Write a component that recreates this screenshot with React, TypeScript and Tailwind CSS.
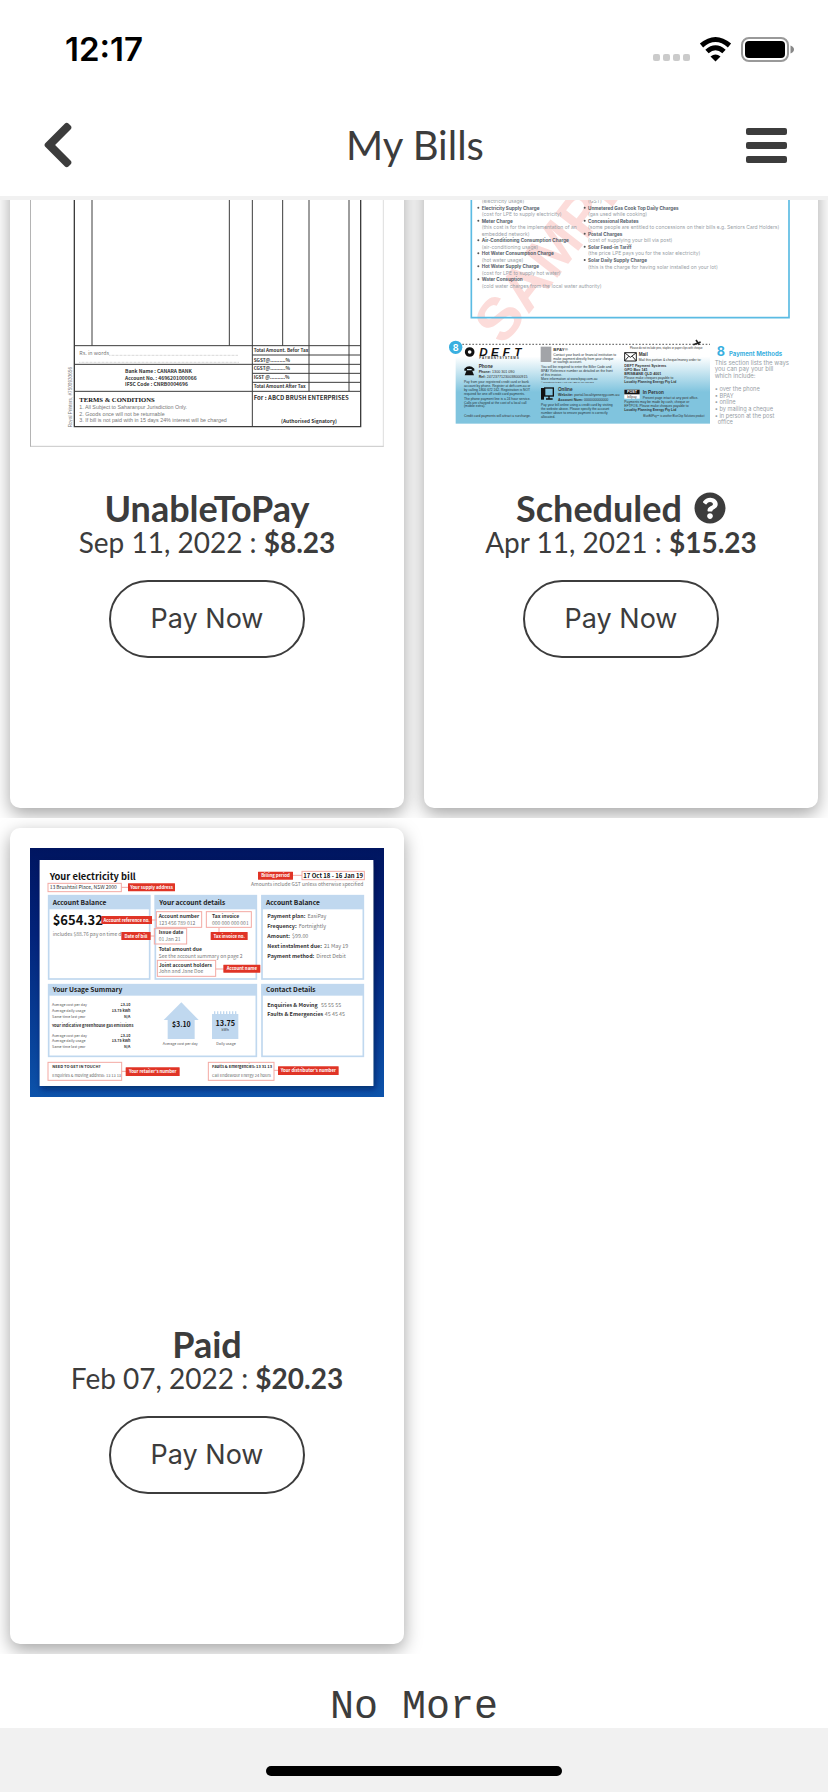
import { useLayoutEffect, useRef } from 'react';
import type { ReactNode } from 'react';
import { FaChevronLeft, FaQuestionCircle } from 'react-icons/fa';

type TextProps = {
  x: number;
  y: number;
  size: number;
  fill?: string;
  bold?: boolean;
  anchor?: 'start' | 'middle' | 'end';
  children: ReactNode;
};

function T({ x, y, size, fill = '#333', bold = false, anchor = 'start', children }: TextProps) {
  return (
    <text x={x} y={y} fontSize={size} fill={fill} fontWeight={bold ? 700 : 400} textAnchor={anchor}>
      {children}
    </text>
  );
}

/* The scans are drawn at three units to the pixel. */

function TaxInvoice() {
  return (
    <svg viewBox="0 0 1062 1350" className="block w-full font-['Noto_Sans',sans-serif]" role="img" aria-label="Tax invoice">
      <g transform="translate(-90 534)">
        <path d="M91 -534V770" stroke="#777" strokeWidth="2" />
        <path d="M91 769H1151" stroke="#aaa" strokeWidth="2" />
        <path d="M1150 -534V770" stroke="#ccc" strokeWidth="2" />
        <g stroke="#3c3c3c" strokeWidth="3" fill="none">
          <path d="M223 -534V710H1082V-534" strokeWidth="4" />
          <path d="M276 -534V467M688 -534V467M757 -534V710M848 -534V467M927 -534V604M1047 -534V604" />
          <path d="M223 467H1082M757 495H1082M223 523H1082M757 550H1082M757 577H1082M223 604H1082" />
        </g>
        <path d="M328 496H716M238 517H716" stroke="#aaa" strokeWidth="2" strokeDasharray="2 2" />
        <g className="font-['Noto_Sans_CJK_SC',sans-serif]">
          <T x={238} y={496} size={16} fill="#777">Rs. in words</T>
          <T x={761} y={487} size={14} bold>Total Amount. Befor Tax</T>
          <T x={761} y={515} size={14} bold>SGST@..........%</T>
          <T x={761} y={541} size={14} bold>CGST@..........%</T>
          <T x={761} y={568} size={14} bold>IGST @..........%</T>
          <T x={761} y={595} size={14} bold>Total Amount After Tax</T>
          <T x={375} y={550} size={15} bold>Bank Name : CANARA BANK</T>
          <T x={375} y={570} size={15} bold>Account No. : 4696201000066</T>
          <T x={375} y={589} size={15} bold>IFSC Code : CNRB0004696</T>
          <T x={761} y={630} size={18} bold>For : ABCD BRUSH ENTERPRISES</T>
          <T x={843} y={698} size={15} bold>(Authorised Signatory)</T>
        </g>
        <g className="font-['Liberation_Serif',serif]">
          <T x={238} y={636} size={20} fill="#111" bold>TERMS &amp; CONDITIONS</T>
        </g>
        <g className="font-['Liberation_Sans',sans-serif]">
          <T x={238} y={658} size={16} fill="#777">1. All Subject to Saharanpur Jurisdiction Only.</T>
          <T x={238} y={677} size={16} fill="#777">2. Goods once will not be returnable</T>
          <T x={238} y={695} size={16} fill="#777">3. If bill is not paid with in 15 days 24% interest will be charged</T>
          <g transform="translate(217 712) rotate(-90)">
            <T x={0} y={0} size={14} fill="#777">Royal Printers, #7500930656</T>
          </g>
        </g>
      </g>
    </svg>
  );
}

const leftCharges: [string, string, number][] = [
  ['', '(electricity usage)', 39],
  ['Electricity Supply Charge', '(cost for LPE to supply electricity)', 59],
  ['Meter Charge', '(this cost is for the implementation of an', 98],
  ['Air-Conditioning Consumption Charge', '(air-conditioning usage)', 157],
  ['Hot Water Consumption Charge', '(hot water usage)', 196],
  ['Hot Water Supply Charge', '(cost for LPE to supply hot water)', 235],
  ['Water Consuption', '(cold water charges from the local water authority)', 274],
];

const rightCharges: [string, string, number][] = [
  ['', '(GST)', 39],
  ['Unmetered Gas Cook Top Daily Charges', '(gas used while cooking)', 59],
  ['Concessional Rebates', '(some people are entitled to concessions on their bills e.g. Seniors Card Holders)', 98],
  ['Postal Charges', '(cost of supplying your bill via post)', 137],
  ['Solar Feed-in Tariff', '(the price LPE pays you for the solar electricity)', 176],
  ['Solar Daily Supply Charge', '(this is the charge for having solar installed on your lot)', 216],
];

function Charges({ x, rows }: { x: number; rows: [string, string, number][] }) {
  return (
    <>
      {rows.map(([name, note, y]) => (
        <g key={note}>
          {name && <circle cx={x - 10} cy={y - 6} r="3" fill="#555" />}
          {name && <T x={x} y={y} size={14} fill="#56606a" bold>{name}</T>}
          <T x={x} y={name ? y + 20 : y} size={15} fill="#98a0a6">{note}</T>
        </g>
      ))}
    </>
  );
}

function Lines({ x, y, step, size, rows, fill = '#26343c' }: { x: number; y: number; step: number; size: number; rows: string[]; fill?: string }) {
  return (
    <>
      {rows.map((row, i) => (
        <T key={row} x={x} y={y + i * step} size={size} fill={fill}>{row}</T>
      ))}
    </>
  );
}

function EnergyStatement() {
  return (
    <svg viewBox="0 0 1062 1350" className="block w-full font-['Inter',sans-serif]" role="img" aria-label="Energy statement">
      <defs>
        <linearGradient id="deft" x1="0" y1="0" x2="0" y2="1">
          <stop offset="0.15" stopColor="#fff" />
          <stop offset="0.6" stopColor="#80c4de" />
          <stop offset="1" stopColor="#80c4de" />
        </linearGradient>
      </defs>
      <g transform="translate(-90 534)">
        <g transform="translate(268 470) rotate(-52)" className="font-['Liberation_Sans',sans-serif]">
          <T x={0} y={0} size={180} fill="#fcdcda" bold>SAMPLE</T>
        </g>
        <Charges x={203} rows={leftCharges} />
        <T x={203} y={138} size={15} fill="#98a0a6">embedded network)</T>
        <Charges x={522} rows={rightCharges} />
        <path d="M172 -534V383H1125V-534" fill="none" stroke="#5bbbe3" strokeWidth="5" />
      </g>
      <g transform="translate(-90 924)">
        <rect x="125" y="74" width="763" height="237" fill="url(#deft)" />
        <path d="M145 73H888" stroke="#777" strokeWidth="4" strokeDasharray="5 5" />
        <path d="M838 74L860 66M846 60L856 74" stroke="#222" strokeWidth="5" />
        <circle cx="125" cy="82" r="20" fill="#39afe0" />
        <T x={125} y={92} size={27} fill="#fff" bold anchor="middle">8</T>
        <circle cx="167" cy="96" r="10" fill="none" stroke="#111" strokeWidth="9" />
        <g className="font-['Liberation_Sans',sans-serif] italic">
          {['D', 'E', 'F', 'T'].map((letter, i) => (
            <T key={letter} x={196 + i * 35} y={108} size={35} fill="#111" bold>{letter}</T>
          ))}
        </g>
        <g className="font-['Liberation_Sans',sans-serif]">
          <T x={196} y={118} size={9} bold>P A Y M E N T   S Y S T E M S</T>
          <path d="M151 146q15-14 30 0v6h-8v-5h-14v5h-8zM158 151h16l6 15h-28z" fill="#111" />
          <T x={194} y={144} size={14} bold>Phone</T>
          <T x={194} y={160} size={11}><tspan fontWeight="700">Phone:</tspan> 1300 301 090</T>
          <T x={194} y={173} size={11}><tspan fontWeight="700">Ref:</tspan> 24723771230038000915</T>
          <Lines x={150} y={188} step={12} size={10} rows={['Pay from your registered credit card or bank', 'account by phone. Register at deft.com.au or', 'by calling 1800 672 162. Registration is NOT', 'required for one off credit card payments.']} />
          <Lines x={150} y={240} step={11} size={10} rows={['The phone payment line is a 24 hour service.', 'Calls are charged at the cost of a local call', '(mobile extra).']} />
          <T x={150} y={292} size={10}>Credit card payments will attract a surcharge.</T>
          <rect x="380" y="80" width="32" height="46" fill="#a2a4a8" />
          <T x={418} y={92} size={13} bold>BPAY®</T>
          <Lines x={418} y={108} step={11} size={10} rows={['Contact your bank or financial institution to', 'make payment directly from your cheque', 'or savings account.']} />
          <Lines x={381} y={144} step={12} size={10} rows={['You will be required to enter the Biller Code and', 'BPAY Reference number as detailed on the front', 'of this invoice.', 'More information at www.bpay.com.au']} />
          <T x={381} y={190} size={7}>® Registered to BPAY Pty Ltd ABN 69 079 137 518</T>
          <rect x="392" y="204" width="26" height="24" fill="none" stroke="#111" strokeWidth="4" />
          <path d="M405 228v9M396 237h20" stroke="#111" strokeWidth="4" />
          <rect x="381" y="204" width="9" height="35" fill="#111" />
          <T x={432} y={213} size={14} bold>Online</T>
          <T x={432} y={229} size={11}><tspan fontWeight="700">Website:</tspan> portal.localityenergy.com.au</T>
          <T x={432} y={243} size={11}><tspan fontWeight="700">Account Num:</tspan> 000000000000</T>
          <Lines x={381} y={257} step={12} size={10} rows={['Pay your bill online using a credit card by visiting', 'the website above. Please specify the account', 'number above to ensure payment is correctly', 'allocated.']} />
          <T x={648} y={86} size={8}>Please do not include pins, staples or paper clips with cheque</T>
          <path d="M632 98h35v25h-35zl17 14 18-14M632 123l12-14M667 123l-12-14" fill="#fff" stroke="#222" strokeWidth="3" />
          <T x={674} y={109} size={14} bold>Mail</T>
          <T x={674} y={124} size={10}>Mail this portion &amp; cheque/money order to:</T>
          <T x={631} y={140} size={11} bold>DEFT Payment Systems</T>
          <T x={631} y={152} size={11} bold>GPO Box 141</T>
          <T x={631} y={164} size={11} bold>BRISBANE QLD 4001</T>
          <T x={631} y={178} size={10}>Please make cheques payable to</T>
          <T x={631} y={190} size={10} bold>Locality Planning Energy Pty Ltd</T>
          <rect x="631" y="209" width="46" height="27" fill="#fff" />
          <rect x="631" y="209" width="46" height="14" fill="#111" />
          <T x={654} y={220} size={11} fill="#fff" bold anchor="middle">POST</T>
          <T x={654} y={234} size={10} anchor="middle">billpay</T>
          <T x={686} y={221} size={14} bold>In Person</T>
          <T x={686} y={237} size={10}>Present page intact at any post office.</T>
          <T x={631} y={250} size={10}>Payments may be made by cash, cheque or</T>
          <T x={631} y={262} size={10}>EFTPOS. Please make cheques payable to</T>
          <T x={631} y={274} size={10} bold>Locality Planning Energy Pty Ltd</T>
          <T x={688} y={291} size={8}>BlueBillPay™ is another BlueChip Solutions product</T>
        </g>
        <T x={908} y={108} size={38} fill="#39afe0" bold>8</T>
        <T x={945} y={108} size={18} fill="#39afe0" bold>Payment Methods</T>
        <Lines x={902} y={135} step={19} size={18} fill="#98a0a6" rows={['This section lists the ways', 'you can pay your bill', 'which include:']} />
        <Lines x={902} y={213} step={20} size={17} fill="#98a0a6" rows={['• over the phone', '• BPAY', '• online', '• by mailing a cheque', '• in person at the post']} />
        <T x={911} y={312} size={17} fill="#98a0a6">office</T>
      </g>
    </svg>
  );
}

function Panel({ x, y, w, h, head, title }: { x: number; y: number; w: number; h: number; head: number; title: string }) {
  return (
    <>
      <rect x={x + 2} y={y + 2} width={w - 4} height={h - 4} fill="#fff" stroke="#c0d8ef" strokeWidth="5" />
      <rect x={x} y={y} width={w} height={head} fill="#c0d8ef" />
      <T x={x + 14} y={y + head / 2 + 7} size={20} fill="#222" bold>{title}</T>
    </>
  );
}

function Tag({ x, y, w, h = 24, children }: { x: number; y: number; w: number; h?: number; children: string }) {
  return (
    <>
      <rect x={x} y={y} width={w} height={h} rx="1" fill="#e03426" />
      <T x={x + w / 2} y={y + h / 2 + 5} size={13} fill="#fff" bold anchor="middle">{children}</T>
    </>
  );
}

function Outline({ x, y, w, h }: { x: number; y: number; w: number; h: number }) {
  return <rect x={x} y={y} width={w} height={h} fill="none" stroke="#f3a9a3" strokeWidth="3" />;
}

function ElectricityBill() {
  return (
    <svg viewBox="0 0 1062 747" className="block w-full font-['Noto_Sans_CJK_SC',sans-serif]" role="img" aria-label="Electricity bill">
      <defs>
        <linearGradient id="sky" x1="0" y1="0" x2="0" y2="1">
          <stop offset="0" stopColor="#001560" />
          <stop offset="0.35" stopColor="#02237a" />
          <stop offset="1" stopColor="#0c53ab" />
        </linearGradient>
        <filter id="sheet" x="-10%" y="-10%" width="120%" height="120%">
          <feDropShadow dx="5" dy="8" stdDeviation="10" floodColor="#000a40" floodOpacity="0.6" />
        </filter>
      </defs>
      <rect width="1062" height="747" fill="url(#sky)" />
      <rect x="29" y="36" width="1001" height="678" fill="#fff" filter="url(#sheet)" />
      <T x={59} y={96} size={28} fill="#111" bold>Your electricity bill</T>
      <T x={59} y={123} size={15}>13 Brushtail Place, NSW 2000</T>
      <Outline x={54} y={106} w={220} h={25} />
      <path d="M274 118H296M788 82H816" stroke="#f3a9a3" strokeWidth="3" />
      <Tag x={294} y={106} w={141}>Your supply address</Tag>
      <Tag x={684} y={71} w={105}>Billing period</Tag>
      <Outline x={816} y={70} w={187} h={25} />
      <T x={999} y={89} size={18} fill="#111" bold anchor="end">17 Oct 18 - 16 Jan 19</T>
      <T x={1000} y={114} size={15} fill="#777" anchor="end">Amounts include GST unless otherwise specified</T>

      <Panel x={54} y={141} w={307} h={254} head={43} title="Account Balance" />
      <Panel x={374} y={141} w={307} h={254} head={43} title="Your account details" />
      <Panel x={694} y={141} w={308} h={254} head={43} title="Account Balance" />
      <Panel x={54} y={408} w={627} h={219} head={35} title="Your Usage Summary" />
      <Panel x={694} y={408} w={308} h={219} head={35} title="Contact Details" />

      <T x={68} y={231} size={39} fill="#111" bold>$654.32</T>
      <T x={68} y={263} size={15} fill="#777">includes $88.76 pay on time d</T>
      <path d="M360 216H380M360 264H375M567 240V252M557 363H582" stroke="#f3a9a3" strokeWidth="3" />
      <Tag x={214} y={204} w={152}>Account reference no.</Tag>
      <Tag x={274} y={252} w={88}>Date of bill</Tag>

      <Outline x={379} y={191} w={136} h={47} />
      <T x={386} y={211} size={15} bold>Account number</T>
      <T x={386} y={231} size={15} fill="#777">123 456 789 012</T>
      <Outline x={529} y={191} w={135} h={47} />
      <T x={546} y={211} size={15} bold>Tax invoice</T>
      <T x={546} y={231} size={15} fill="#777">000 000 000 001</T>
      <Tag x={542} y={252} w={111}>Tax invoice no.</Tag>
      <Outline x={373} y={242} w={97} h={46} />
      <T x={386} y={258} size={15} bold>Issue date</T>
      <T x={386} y={279} size={15} fill="#777">01 Jan 21</T>
      <T x={386} y={308} size={15} bold>Total amount due</T>
      <T x={386} y={330} size={15} fill="#777">See the account summary on page 2</T>
      <Outline x={382} y={337} w={175} h={48} />
      <T x={386} y={356} size={15} bold>Joint account holders</T>
      <T x={386} y={376} size={15} fill="#777">John and Jane Doe</T>
      <Tag x={580} y={350} w={111}>Account name</Tag>

      {[
        ['Payment plan:', 'EasiPay', 211],
        ['Frequency:', 'Fortnightly', 240],
        ['Amount:', '$99.00', 269],
        ['Next instalment due:', '21 May 19', 299],
        ['Payment method:', 'Direct Debit', 331],
      ].map(([label, value, y]) => (
        <T key={label} x={712} y={Number(y)} size={16}>
          <tspan fontWeight="700">{label}</tspan>
          <tspan dx="6" fill="#777">{value}</tspan>
        </T>
      ))}
      <T x={712} y={476} size={16}><tspan fontWeight="700">Enquiries &amp; Moving</tspan><tspan dx="10" fill="#777">55 55 55</tspan></T>
      <T x={712} y={505} size={16}><tspan fontWeight="700">Faults &amp; Emergencies</tspan><tspan dx="5" fill="#777">45 45 45</tspan></T>

      {[475, 566].map((top) => (
        <g key={top}>
          <T x={66} y={top} size={11} fill="#555">Average cost per day</T>
          <T x={301} y={top} size={11} bold anchor="end">$3.10</T>
          <T x={66} y={top + 17} size={11} fill="#555">Average daily usage</T>
          <T x={301} y={top + 17} size={11} bold anchor="end">13.75 kWh</T>
          <T x={66} y={top + 34} size={11} fill="#555">Same time last year</T>
          <T x={301} y={top + 34} size={11} bold anchor="end">N/A</T>
        </g>
      ))}
      <T x={66} y={537} size={12} bold>Your indicative greenhouse gas emissions</T>
      <path d="M454 463L506 516H494V573H413V516H401Z" fill="#c0d8ef" />
      <T x={454} y={536} size={21} fill="#111" bold anchor="middle">$3.10</T>
      <T x={451} y={591} size={11} fill="#555" anchor="middle">Average cost per day</T>
      <rect x="546" y="498" width="79" height="75" fill="#c0d8ef" />
      <path d="M552 494H622" stroke="#c0d8ef" strokeWidth="8" strokeDasharray="4 5" />
      <T x={586} y={534} size={22} fill="#111" bold anchor="middle">13.75</T>
      <T x={586} y={549} size={11} anchor="middle">kWh</T>
      <T x={588} y={591} size={11} fill="#555" anchor="middle">Daily usage</T>

      <Outline x={54} y={643} w={221} h={54} />
      <T x={67} y={661} size={12} bold>NEED TO GET IN TOUCH?</T>
      <T x={67} y={687} size={12} fill="#666">Enquiries &amp; moving address: 13 13 13</T>
      <Outline x={535} y={643} w={197} h={54} />
      <T x={546} y={661} size={12} bold>Faults &amp; Emergencies: 13 31 13</T>
      <T x={546} y={687} size={12} fill="#666">Call Endeavour Energy 24 hours</T>
      <path d="M275 670H288M732 667H746" stroke="#f3a9a3" strokeWidth="3" />
      <Tag x={287} y={658} w={162} h={26}>Your retailer's number</Tag>
      <Tag x={744} y={655} w={182} h={26}>Your distributor's number</Tag>
    </svg>
  );
}

function BillCard({ scan, status, date, amount, help = false }: { scan: ReactNode; status: string; date: string; amount: string; help?: boolean }) {
  return (
    <article className="flex h-[816px] flex-col items-center rounded-[10px] bg-white p-5 shadow-[0_6px_18px_rgba(0,0,0,0.36)]">
      <div className="h-[472px] w-full overflow-hidden">{scan}</div>
      <h2 className="mt-1.5 flex items-center gap-3 text-[36px] leading-9 font-bold">
        {status}
        {help && (
          <button type="button" aria-label="About scheduled bills">
            <FaQuestionCircle className="size-8" />
          </button>
        )}
      </h2>
      <p className="text-[28px] leading-8">
        {date} : <strong className="font-bold">{amount}</strong>
      </p>
      <button type="button" className="mt-[22px] h-[78px] w-[196px] rounded-full border-2 border-[#3c3c3c] font-['Inter',sans-serif] text-[27px]">
        Pay Now
      </button>
    </article>
  );
}

function StatusBar() {
  return (
    <div className="flex h-[100px] items-center justify-between pr-[34px] pl-[65px] text-black">
      <span className="font-['Inter',sans-serif] text-[33px] font-semibold">12:17</span>
      <svg width="142" height="28" viewBox="652 36 142 28" aria-hidden="true">
        <g fill="#cbcbcb">
          <rect x="653" y="54" width="7" height="7" rx="2" />
          <rect x="663" y="54" width="7" height="7" rx="2" />
          <rect x="673" y="54" width="7" height="7" rx="2" />
          <rect x="683" y="54" width="7" height="7" rx="2" />
        </g>
        <g fill="none" stroke="#000" strokeWidth="5">
          <path d="M701.5 45.5Q715.500 33.500 729.500 45.500" />
          <path d="M707 51.500Q715.500 44 724 51.500" />
        </g>
        <path d="M710.500 56.500Q715.500 52.500 720.500 56.500L715.500 61.500Z" />
        <rect x="742" y="38" width="46" height="23" rx="7" fill="none" stroke="#999" strokeWidth="2" />
        <rect x="745" y="41" width="40" height="17" rx="4" />
        <path d="M790.500 45.500Q794 47 794 49.500Q794 52 790.500 53.500Z" fill="#888" />
      </svg>
    </div>
  );
}

export default function App() {
  const list = useRef<HTMLElement>(null);

  useLayoutEffect(() => {
    if (list.current) list.current.scrollTop = list.current.scrollHeight;
  }, []);

  return (
    <div className="flex h-screen flex-col bg-white font-['Lato',sans-serif] text-[#3c3c3c]">
      <StatusBar />
      <header className="flex h-[100px] items-center justify-between border-b-4 border-[#f1f1f1] pr-10 pb-1.5 pl-8">
        <button type="button" aria-label="Back">
          <FaChevronLeft className="size-[52px]" />
        </button>
        <h1 className="text-[40px]">My Bills</h1>
        <button type="button" aria-label="Menu">
          <svg width="42" height="35" viewBox="0 0 42 35" fill="currentColor" aria-hidden="true">
            <rect y="0" width="41" height="7" rx="2" />
            <rect y="14" width="41" height="7" rx="2" />
            <rect y="28" width="41" height="7" rx="2" />
          </svg>
        </button>
      </header>
      <main ref={list} className="min-h-0 flex-1 overflow-y-auto [scrollbar-width:none]">
        <section className="grid grid-cols-2 gap-5 overflow-hidden p-[10px]">
          <BillCard scan={<TaxInvoice />} status="UnableToPay" date="Sep 11, 2022" amount="$8.23" />
          <BillCard scan={<EnergyStatement />} status="Scheduled" date="Apr 11, 2021" amount="$15.23" help />
        </section>
        <section className="grid grid-cols-2 gap-5 overflow-hidden p-[10px]">
          <BillCard scan={<ElectricityBill />} status="Paid" date="Feb 07, 2022" amount="$20.23" />
        </section>
        <p className="overflow-hidden pt-[34px] text-center font-['Liberation_Mono',monospace] text-[40px] leading-10">No More</p>
      </main>
      <footer className="flex h-16 justify-center bg-[#f1f1f1] pt-[38px]">
        <div className="h-[10px] w-[296px] rounded-full bg-black" />
      </footer>
    </div>
  );
}
